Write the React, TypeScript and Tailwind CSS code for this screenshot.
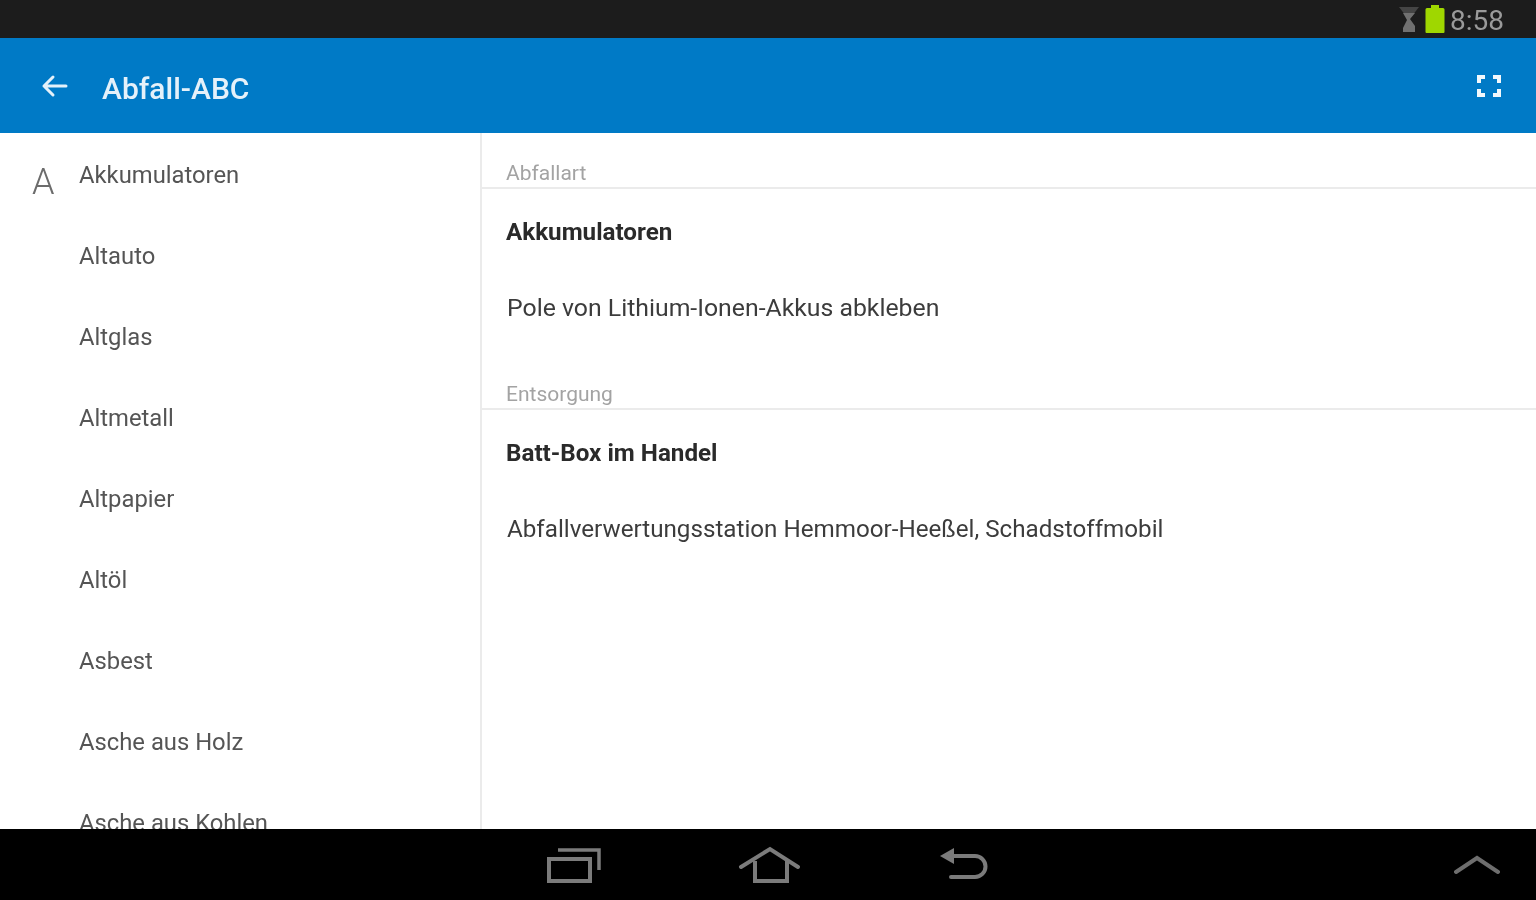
const ITEMS = [
  "Akkumulatoren",
  "Altauto",
  "Altglas",
  "Altmetall",
  "Altpapier",
  "Altöl",
  "Asbest",
  "Asche aus Holz",
  "Asche aus Kohlen",
];

function BackIcon() {
  return (
    <svg width="28" height="28" viewBox="0 0 28 28" fill="none" aria-hidden="true">
      <path d="M26 14H4M13 5l-9 9 9 9" stroke="#e4f1fa" strokeWidth="3" strokeLinecap="round" strokeLinejoin="round" />
    </svg>
  );
}

function FullscreenIcon() {
  return (
    <svg width="24" height="22" viewBox="0 0 24 22" fill="none" aria-hidden="true">
      <path d="M2 8V2h6M16 2h6v6M22 14v6h-6M8 20H2v-6" stroke="#f2f8fc" strokeWidth="4" />
    </svg>
  );
}

function SignalIcon() {
  return (
    <svg width="22" height="28" viewBox="0 0 22 28" fill="none" aria-hidden="true">
      <path d="M1 2h20l-10 13z" fill="#454545" />
      <path d="M5 8h12l-5 6 5 7v6H5v-4l4-8z" fill="#707070" />
    </svg>
  );
}

function BatteryIcon() {
  return (
    <svg width="20" height="30" viewBox="0 0 20 30" fill="none" aria-hidden="true">
      <path d="M6 4V1h8v3h4a1.500 1.500 0 0 1 1.500 1.500V28a1 1 0 0 1-1 1H1.500a1 1 0 0 1-1-1V5.500A1.500 1.500 0 0 1 2 4z" fill="#9fd700" />
    </svg>
  );
}

function RecentsIcon() {
  return (
    <svg width="58" height="40" viewBox="0 0 58 40" fill="none" aria-hidden="true">
      <path d="M5 14h41v22H5z" stroke="#7b7b7b" strokeWidth="4" />
      <path d="M14 5h41v20" stroke="#7b7b7b" strokeWidth="3.500" />
    </svg>
  );
}

function HomeIcon() {
  return (
    <svg width="64" height="40" viewBox="0 0 64 40" fill="none" aria-hidden="true">
      <path d="M3 22 32 4l28 18" stroke="#7b7b7b" strokeWidth="4" strokeLinecap="round" />
      <path d="M17 16v20h32V16" stroke="#7b7b7b" strokeWidth="4" />
    </svg>
  );
}

function BackNavIcon() {
  return (
    <svg width="50" height="36" viewBox="0 0 50 36" fill="none" aria-hidden="true">
      <path d="M2 9 16 1v16z" fill="#7b7b7b" />
      <path d="M15 9h22a10.500 10.500 0 0 1 0 21H13" stroke="#7b7b7b" strokeWidth="4" strokeLinecap="round" />
    </svg>
  );
}

function ChevronUpIcon() {
  return (
    <svg width="46" height="20" viewBox="0 0 46 20" fill="none" aria-hidden="true">
      <path d="M2 17 23 3l21 14" stroke="#6e6e6e" strokeWidth="4" strokeLinecap="round" />
    </svg>
  );
}

function SectionHeader({ title }: { title: string }) {
  return (
    <div className="flex h-[56px] items-end border-b-2 border-[#ebebeb] pl-[24px] text-[21px] leading-[28px] text-[#a3a3a3]">
      {title}
    </div>
  );
}

export default function App() {
  return (
    <div className="flex h-[900px] flex-col overflow-hidden bg-white font-['Roboto',sans-serif] blur-[0.6px]">
      {/* Status bar */}
      <div className="flex h-[38px] shrink-0 items-center justify-end gap-[5px] bg-[#1c1c1c] pr-[32px]">
        <SignalIcon />
        <BatteryIcon />
        <span className="mt-[4px] text-[28px] leading-none text-[#9a9a9a]">8:58</span>
      </div>

      {/* App bar */}
      <div className="flex h-[95px] shrink-0 items-center justify-between bg-[#007ac6] pl-[40px] pr-[35px]">
        <div className="flex items-center gap-[34px]">
          <BackIcon />
          <span className="mt-[5px] text-[30px] font-medium text-[#e4f1fa]">Abfall-ABC</span>
        </div>
        <FullscreenIcon />
      </div>

      <div className="flex min-h-0 flex-1">
        {/* List */}
        <div className="relative w-[482px] shrink-0 overflow-hidden border-r-2 border-[#ebebeb] pt-[2px]">
          <span className="absolute left-[32px] top-[31px] text-[36px] font-light leading-none text-[#6c6c6c]">A</span>
          {ITEMS.map((item) => (
            <div key={item} className="flex h-[81px] items-center pl-[79px] text-[23.8px] text-[#555555]">
              {item}
            </div>
          ))}
        </div>

        {/* Detail */}
        <div className="min-w-0 flex-1">
          <SectionHeader title="Abfallart" />
          <div className="flex h-[86px] items-center pl-[24px] text-[24.2px] font-bold text-[#2a2a2a]">Akkumulatoren</div>
          <div className="flex h-[66px] items-center pl-[25px] text-[24.8px] text-[#3c3c3c]">
            Pole von Lithium-Ionen-Akkus abkleben
          </div>
          <div className="h-[13px]" />
          <SectionHeader title="Entsorgung" />
          <div className="flex h-[86px] items-center pl-[24px] text-[24.2px] font-bold text-[#2a2a2a]">Batt-Box im Handel</div>
          <div className="flex h-[66px] items-center pl-[25px] text-[24.2px] text-[#3c3c3c]">
            Abfallverwertungsstation Hemmoor-Heeßel, Schadstoffmobil
          </div>
        </div>
      </div>

      {/* Nav bar */}
      <div className="relative flex h-[71px] shrink-0 items-center justify-center gap-[136px] bg-black pr-[4px]">
        <RecentsIcon />
        <HomeIcon />
        <BackNavIcon />
        <div className="absolute right-[36px] top-[26px]">
          <ChevronUpIcon />
        </div>
      </div>
    </div>
  );
}
